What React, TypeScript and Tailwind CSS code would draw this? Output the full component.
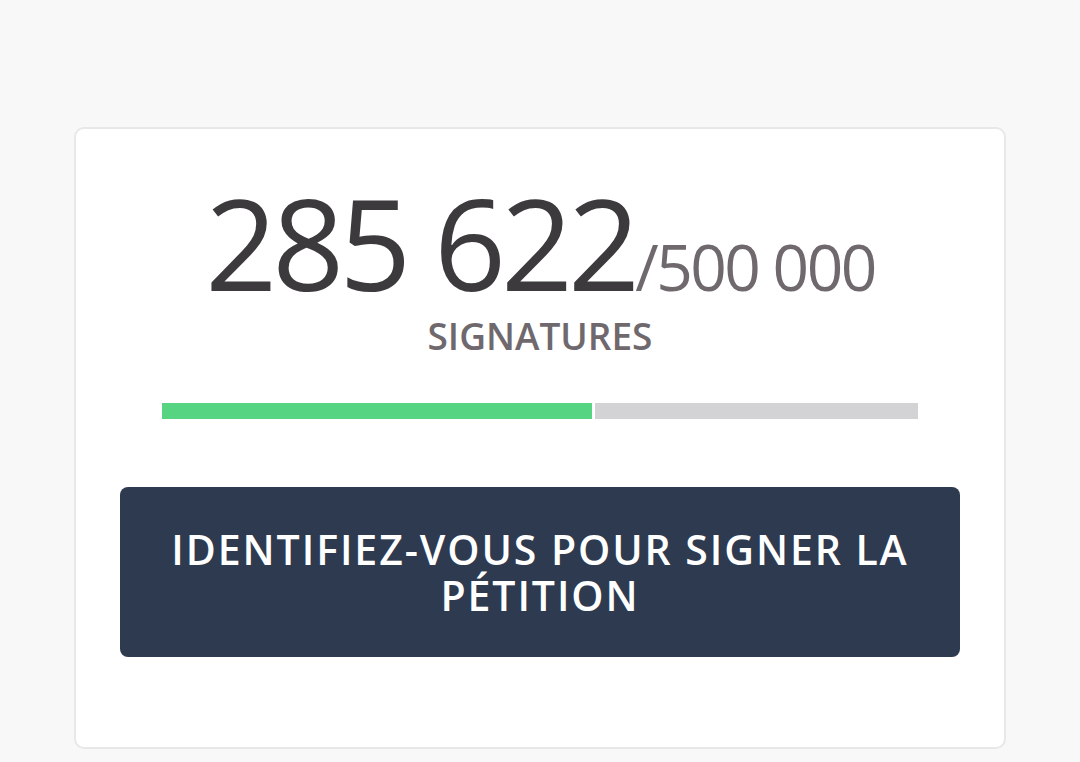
import React from "react";

export default function App() {
  return (
    <div
      className="w-[1080px] h-[762px] overflow-hidden bg-[#f8f8f8] pt-[127px] pl-[74px]"
      style={{ fontFamily: '"Open Sans", "Noto Sans", sans-serif' }}
    >
      <div className="w-[932px] h-[622px] bg-white border-2 border-[#e8e8e8] rounded-[10px] px-[44px] pt-[50px] flex flex-col">
        <div className="flex items-baseline justify-center h-[126px]">
          <span className="text-[126px] leading-[126px] tracking-[-5px] text-[#3d3a3d] font-normal">
            285 622
          </span>
          <span className="text-[64px] leading-[64px] tracking-[-2.5px] text-[#6f696e] font-normal">
            /500 000
          </span>
        </div>
        <div className="mt-[12px] text-center text-[37px] leading-[38px] font-semibold text-[#6f696e]">
          SIGNATURES
        </div>
        <div className="mt-[48px] mx-[42px] flex gap-[3px] h-[16px]">
          <div className="w-[430px] bg-[#56d481]" />
          <div className="flex-1 bg-[#d3d2d4]" />
        </div>
        <button className="mt-[68px] h-[170px] w-full rounded-[8px] bg-[#2d3a50] text-white text-[41px] leading-[46px] font-semibold tracking-[0.047em] px-[10px]">
          IDENTIFIEZ-VOUS POUR SIGNER LA PÉTITION
        </button>
      </div>
    </div>
  );
}
